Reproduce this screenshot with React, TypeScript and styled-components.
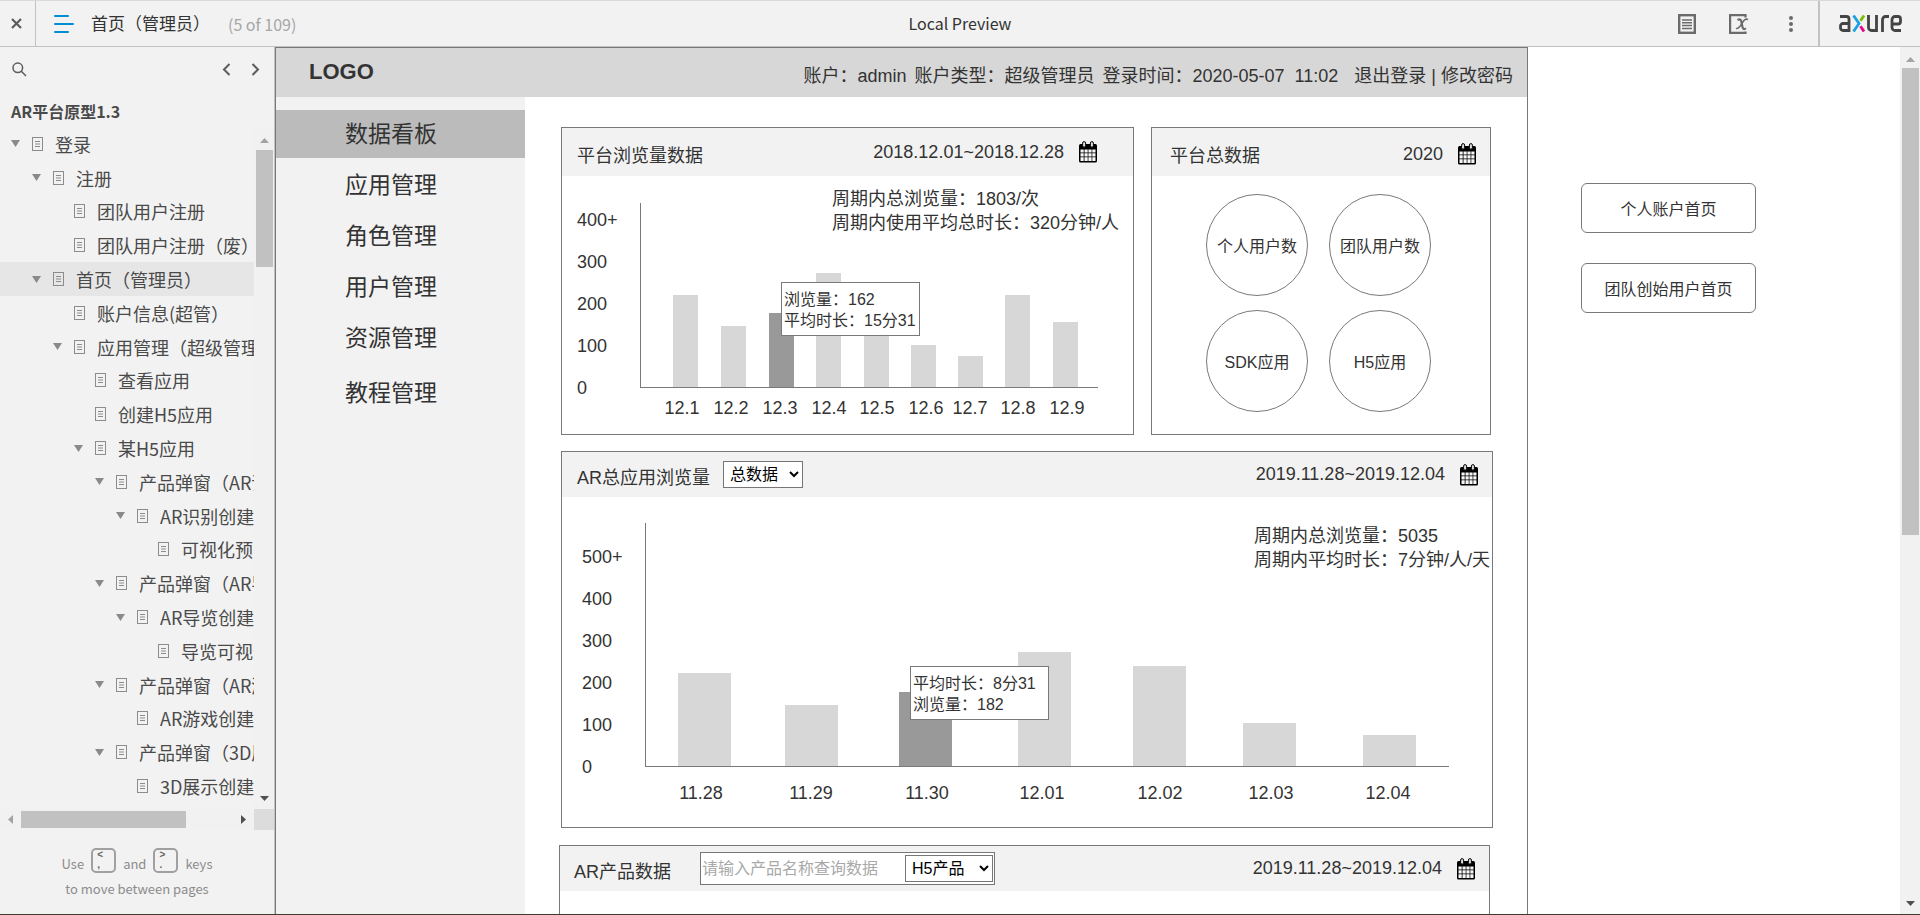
import React from "react";
import styled, { createGlobalStyle } from "styled-components";

const LINE = "#797979";
const UI_FONT = `"Noto Sans CJK SC", sans-serif`;
const PAGE_FONT = `"Liberation Sans", "Noto Sans CJK SC", sans-serif`;

const GlobalStyle = createGlobalStyle`
  * { box-sizing: border-box; }
  html, body, #root { height: 100%; }
  body { margin: 0; overflow: hidden; background: #fff; color: #333; font-family: ${PAGE_FONT}; }
  button, input, select { font-family: inherit; margin: 0; }
  button { background: none; border: 0; padding: 0; color: inherit; cursor: pointer; }
  a { color: inherit; text-decoration: none; }
  ul { list-style: none; margin: 0; padding: 0; }
  h1, h2, p { margin: 0; font-weight: 400; }
  svg { display: block; flex: none; }
`;

/* ---------- shell ---------- */

const Shell = styled.div`
  display: flex;
  flex-direction: column;
  height: 100vh;
  border-top: 1px solid #d9d9d9;
  border-bottom: 1px solid #3f3a2c;
`;

const TopBar = styled.header`
  display: grid;
  grid-template-columns: 1fr auto 1fr;
  flex: none;
  height: 46px;
  background: #f2f2f2;
  border-bottom: 1px solid #c2c2c2;
  font-family: ${UI_FONT};
  font-size: 16px;
`;

const TopLeft = styled.div`
  display: flex;
  align-items: center;
`;

const CloseButton = styled.button`
  display: flex;
  align-items: center;
  justify-content: center;
  width: 36px;
  height: 100%;
  padding-right: 2px;
  border-right: 1px solid #c2c2c2;
`;

const MenuButton = styled.button`
  margin: 0 17px 0 18px;
`;

const PageName = styled.h1`
  padding-bottom: 2px;
  font-size: 17px;
  line-height: 24px;
`;

const PageCount = styled.span`
  margin-left: 18px;
  color: #a6a6a6;
`;

const PreviewName = styled.div`
  align-self: center;
  padding-bottom: 2px;
  line-height: 24px;
`;

const TopRight = styled.div`
  display: flex;
  align-items: center;
  justify-content: flex-end;
`;

const ToolButton = styled.button`
  display: flex;
  justify-content: center;
  width: 52px;
`;

const Brand = styled.a`
  display: flex;
  align-items: center;
  width: 102px;
  height: 100%;
  margin-left: 1px;
  padding-left: 19px;
  border-left: 2px solid #c2c2c2;
`;

const Body = styled.div`
  display: flex;
  flex: 1;
  min-height: 0;
`;

/* ---------- page list ---------- */

const Sidebar = styled.aside`
  display: flex;
  flex-direction: column;
  flex: none;
  width: 275px;
  background: #f2f2f2;
  border-right: 1px solid #c2c2c2;
  color: #4a4a4a;
  font-family: ${UI_FONT};
`;

const SideTools = styled.div`
  display: flex;
  align-items: center;
  height: 45px;
  padding: 0 14px 0 12px;
  gap: 20px;
`;

const SearchButton = styled.button`
  margin-right: auto;
`;

const ProjectName = styled.h2`
  padding-left: 11px;
  height: 35px;
  font-size: 16px;
  font-weight: 700;
  line-height: 38px;
`;

const TreeArea = styled.div`
  display: flex;
  flex: 1;
  min-height: 0;
`;

const Tree = styled.ul`
  display: flex;
  flex-direction: column;
  flex: 1;
  min-width: 0;
  overflow: hidden;
  padding-bottom: 6px;
`;

const TreeRow = styled.li<{ $level: number; $current?: boolean }>`
  display: flex;
  align-items: center;
  flex: 1;
  min-height: 0;
  padding-left: ${(p) => 11 + p.$level * 21}px;
  background: ${(p) => (p.$current ? "#e6e6e6" : "transparent")};
  white-space: nowrap;
`;

const Twisty = styled.span`
  flex: none;
  width: 21px;
`;

const TreeLink = styled.a`
  display: flex;
  align-items: center;
  gap: 12px;
  font-size: 18px;
  line-height: 24px;
`;

const ScrollTrack = styled.div<{ $row?: boolean }>`
  display: flex;
  flex-direction: ${(p) => (p.$row ? "row" : "column")};
  align-items: center;
  justify-content: space-between;
  flex: none;
  width: ${(p) => (p.$row ? "auto" : "20px")};
  height: ${(p) => (p.$row ? "21px" : "auto")};
  padding: ${(p) => (p.$row ? "0 8px" : "10px 0 8px")};
  background: #f1f1f1;
`;

const TreeScrollTrack = styled(ScrollTrack)`
  padding-top: 11px;
`;

const TreeThumb = styled.div`
  width: 17px;
  height: 117px;
  margin: 7px 0 auto;
  background: #c1c1c1;
`;

const TreeThumbRow = styled.div`
  width: 165px;
  height: 17px;
  margin: 0 auto 0 8px;
  background: #c1c1c1;
`;

const BottomScroll = styled.div`
  display: grid;
  grid-template-columns: 1fr 20px;
`;

const ScrollCorner = styled.div`
  background: #dcdcdc;
`;

const KeyHint = styled.footer`
  display: flex;
  flex-direction: column;
  align-items: center;
  height: 84px;
  padding-top: 16px;
  color: #8c8c8c;
  font-size: 13px;
  line-height: 27px;
`;

const KeyLine = styled.p`
  display: flex;
  align-items: center;
  height: 29px;
`;

const KeyWord = styled.span`
  padding-top: 6px;
`;

const KeyCap = styled.kbd`
  display: flex;
  flex-direction: column;
  width: 25px;
  height: 25px;
  margin: 0 7px;
  padding-left: 4px;
  border: 2px solid #a0a0a0;
  border-radius: 5px;
  color: #666;
  font-family: ${PAGE_FONT};
  font-size: 10px;
  font-weight: 700;
  line-height: 10px;
`;

/* ---------- prototype canvas ---------- */

const Canvas = styled.main`
  display: flex;
  flex: 1;
  min-width: 0;
  overflow: hidden;
`;

const Frame = styled.section`
  display: flex;
  flex-direction: column;
  flex: 1;
  min-width: 0;
  border: 1px solid ${LINE};
  border-bottom: 0;
`;

const FrameHeader = styled.header`
  display: flex;
  justify-content: space-between;
  flex: none;
  height: 49px;
  padding: 0 14px 0 33px;
  background: #d7d7d7;
`;

const Logo = styled.div`
  font-size: 22px;
  font-weight: 700;
  line-height: 48px;
`;

const Account = styled.div`
  display: flex;
  padding-top: 4px;
  font-size: 18px;
  line-height: 48px;
  white-space: nowrap;
`;

const AccountItem = styled.span`
  margin-right: 8px;
`;

const AccountLinks = styled.nav`
  display: flex;
  gap: 5px;
  margin-left: 8px;
`;

const FrameBody = styled.div`
  display: flex;
  flex: 1;
  min-height: 0;
`;

const Menu = styled.nav`
  flex: none;
  width: 249px;
  background: #f2f2f2;
`;

const MenuList = styled.ul`
  display: flex;
  flex-direction: column;
  gap: 3px;
  padding-top: 13px;
`;

const MenuItem = styled.li<{ $active?: boolean; $apart?: boolean }>`
  height: 48px;
  margin-top: ${(p) => (p.$apart ? 4 : 0)}px;
  padding-left: 69px;
  background: ${(p) => (p.$active ? "#bbbbbb" : "transparent")};
  font-size: 23px;
  line-height: 48px;
`;

const Content = styled.div`
  display: flex;
  flex-direction: column;
  flex: 1;
  min-width: 0;
  gap: 16px;
  padding: 30px 34px 0;
  overflow: hidden;
`;

const CardRow = styled.div`
  display: flex;
  gap: 17px;
  flex: none;
  padding: 0 2px;
`;

const Card = styled.article<{ $grow?: boolean; $width?: number; $margin?: string }>`
  position: relative;
  flex: ${(p) => (p.$grow ? "1" : "none")};
  width: ${(p) => (p.$width ? `${p.$width}px` : "auto")};
  margin: ${(p) => p.$margin ?? "0"};
  border: 1px solid ${LINE};
`;

const ProductCard = styled(Card)`
  min-height: 300px;
`;

const CardHeader = styled.div<{ $height: number; $right?: number; $left?: number }>`
  display: flex;
  align-items: center;
  height: ${(p) => p.$height}px;
  padding: 0 ${(p) => p.$right ?? 14}px 0 ${(p) => p.$left ?? 15}px;
  background: #f2f2f2;
  font-size: 18px;
  white-space: nowrap;
`;

const CardTitle = styled.h2`
  padding-top: 3px;
  font-size: 18px;
`;

const DateRange = styled.div<{ $low?: boolean }>`
  display: flex;
  align-items: center;
  gap: 15px;
  margin-left: auto;
  padding-top: ${(p) => (p.$low ? 4 : 0)}px;
`;

const Select = styled.select<{ $width: number }>`
  width: ${(p) => p.$width}px;
  height: 27px;
  padding: 0 2px;
  border: 1px solid #767676;
  border-radius: 0;
  background: #fff;
  color: #000;
  font-size: 16px;
`;

const TitleSelect = styled(Select)`
  margin-left: 13px;
`;

const SearchBox = styled.div`
  display: flex;
  align-items: center;
  width: 295px;
  height: 33px;
  margin-left: 29px;
  padding-right: 1px;
  border: 1px solid #767676;
  background: #fff;
`;

const SearchInput = styled.input`
  flex: 1;
  min-width: 0;
  padding: 0 1px;
  border: 0;
  outline: 0;
  background: transparent;
  font-size: 16px;
  &::placeholder { color: #a9a9a9; opacity: 1; }
`;

const Summary = styled.p<{ $top: number; $right: number }>`
  position: absolute;
  top: ${(p) => p.$top}px;
  right: ${(p) => p.$right}px;
  font-size: 18px;
  line-height: 24px;
  white-space: nowrap;
`;

const Chart = styled.div<{ $pad: string }>`
  display: flex;
  padding: ${(p) => p.$pad};
  font-size: 18px;
`;

const ScaleList = styled.ul<{ $width: number; $left: number; $top: number }>`
  flex: none;
  width: ${(p) => p.$width}px;
  padding-left: ${(p) => p.$left}px;
  margin-top: ${(p) => p.$top}px;
  line-height: 42px;
`;

const PlotColumn = styled.div<{ $top: number }>`
  flex: 1;
  min-width: 0;
  padding-top: ${(p) => p.$top}px;
`;

const Plot = styled.div<{ $height: number }>`
  position: relative;
  display: flex;
  align-items: flex-end;
  height: ${(p) => p.$height}px;
  border-left: 1px solid ${LINE};
  border-bottom: 1px solid ${LINE};
`;

const Bar = styled.div<{ $width: number; $height: number; $gap: number; $hot?: boolean }>`
  flex: none;
  width: ${(p) => p.$width}px;
  height: ${(p) => p.$height}px;
  margin-left: ${(p) => p.$gap}px;
  background: ${(p) => (p.$hot ? "#999999" : "#d7d7d7")};
`;

const MarkRow = styled.div<{ $height: number }>`
  display: flex;
  line-height: ${(p) => p.$height}px;
`;

const Mark = styled.span<{ $width: number; $gap: number }>`
  flex: none;
  width: ${(p) => p.$width}px;
  margin-left: ${(p) => p.$gap}px;
  text-align: center;
`;

const Tooltip = styled.div<{ $left: number; $top: number }>`
  position: absolute;
  left: ${(p) => p.$left}px;
  top: ${(p) => p.$top}px;
  width: 139px;
  height: 54px;
  padding: 6px 0 0 2px;
  border: 1px solid ${LINE};
  background: #fff;
  font-size: 16px;
  line-height: 21px;
  white-space: nowrap;
`;

const Circles = styled.div`
  display: grid;
  grid-template-columns: 102px 102px;
  gap: 14px 21px;
  padding: 18px 0 0 54px;
`;

const Circle = styled.div`
  display: flex;
  align-items: center;
  justify-content: center;
  height: 102px;
  border: 1px solid ${LINE};
  border-radius: 50%;
  font-size: 16px;
`;

const Shortcuts = styled.aside`
  display: flex;
  flex-direction: column;
  gap: 30px;
  flex: none;
  width: 372px;
  padding: 136px 0 0 53px;
`;

const Shortcut = styled.button`
  width: 175px;
  height: 50px;
  border: 1px solid ${LINE};
  border-radius: 6px;
  background: #fff;
  font-size: 16px;
`;

const PageThumb = styled.div`
  width: 17px;
  height: 467px;
  margin: 6px 0 auto;
  background: #c1c1c1;
`;

/* ---------- icons ---------- */

const Arrow = ({ dir, dim }: { dir: "up" | "down" | "left" | "right"; dim?: boolean }) => {
  const shapes = {
    up: { w: 9, h: 5, p: "0,5 9,5 4.5,0" },
    down: { w: 9, h: 5, p: "0,0 9,0 4.5,5" },
    left: { w: 5, h: 9, p: "5,0 5,9 0,4.5" },
    right: { w: 5, h: 9, p: "0,0 0,9 5,4.5" },
  };
  const s = shapes[dir];
  return (
    <svg width={s.w} height={s.h} viewBox={`0 0 ${s.w} ${s.h}`} aria-hidden>
      <polygon points={s.p} fill={dim ? "#a3a3a3" : "#505050"} />
    </svg>
  );
};

const TwistyIcon = () => (
  <svg width="9" height="7" viewBox="0 0 9 7" aria-hidden>
    <polygon points="0,0 9,0 4.5,7" fill="#8a8a8a" />
  </svg>
);

const SheetIcon = () => (
  <svg width="11" height="14" viewBox="0 0 11 14" fill="none" stroke="#8c8c8c" aria-hidden>
    <rect x="0.5" y="0.5" width="10" height="13" />
    <path d="M3 4.5h5M3 7h5M3 9.5h5" />
  </svg>
);

const CalendarIcon = () => (
  <svg width="18" height="22" viewBox="0 0 18 22" aria-hidden>
    <rect x="0" y="3" width="18" height="18.5" rx="1.5" fill="#000" />
    <path
      d="M1.500 8.500h3.200v3h-3.200zM5.500 8.500h3.200v3h-3.200zM9.400 8.500h3.200v3h-3.200zM13.300 8.500h3.200v3h-3.200zM1.500 12.300h3.200v3.200h-3.200zM5.500 12.300h3.200v3.200h-3.200zM9.400 12.300h3.200v3.200h-3.200zM13.300 12.300h3.200v3.200h-3.200zM1.500 16.300h3.200v3.700h-3.200zM5.500 16.300h3.200v3.700h-3.200zM9.400 16.300h3.200v3.700h-3.200zM13.300 16.300h3.200v3.700h-3.200z"
      fill="#f6f6f6"
    />
    <rect x="3.6" y="0.6" width="3" height="5.6" rx="1.5" fill="#ddd" stroke="#000" />
    <rect x="11.4" y="0.6" width="3" height="5.6" rx="1.5" fill="#ddd" stroke="#000" />
  </svg>
);

const NotesIcon = () => (
  <svg width="18" height="20" viewBox="0 0 18 20" fill="none" stroke="#6b6b6b" strokeWidth="2.4" aria-hidden>
    <rect x="1.200" y="1.200" width="15.600" height="17.600" />
    <path d="M4 6h10M4 8.800h10M4 11.600h10M4 14.400h10" strokeWidth="1.500" />
  </svg>
);

const ConsoleIcon = () => (
  <svg width="20" height="20" viewBox="0 0 20 20" fill="none" stroke="#6b6b6b" strokeWidth="2.2" aria-hidden>
    <path d="M16.500 3.500V1.100H1.100v17.800h15.400v-1.500" />
    <path d="M8.500 6c2.500-1.400 3.500-.3 3.900 1.800l1 5c.4 2.200 1.700 3 3.500 1.400" />
    <path d="M19 5.600c-2.200-1.400-4 .4-5.800 3.400s-3.600 6.200-6.200 5.400" strokeWidth="1.500" />
  </svg>
);

const DotsIcon = () => (
  <svg width="4" height="16" viewBox="0 0 4 16" fill="#6b6b6b" aria-hidden>
    <circle cx="2" cy="2" r="2" />
    <circle cx="2" cy="8" r="2" />
    <circle cx="2" cy="14" r="2" />
  </svg>
);

const BrandMark = () => (
  <svg width="64" height="17" viewBox="0 0 64 17" role="img" aria-label="axure">
    <g fill="none" strokeWidth="2.800">
      <g stroke="#444">
        <path d="M1 1.500h6.500a2.500 2.500 0 0 1 2.500 2.500v11.500H4a2.500 2.500 0 0 1-2.500-2.500v-2A2.500 2.500 0 0 1 4 8.500h6" />
        <path d="M29.500 0v12.500a3 3 0 0 0 3 3h5V0" />
        <path d="M43.500 17V4.500a3 3 0 0 1 3-3H50" />
        <path d="M62 15.500h-6a3 3 0 0 1-3-3V4.500a3 3 0 0 1 3-3h3a2.500 2.500 0 0 1 2.500 2.500v2.500a2.500 2.500 0 0 1-2.500 2.500H54" />
      </g>
      <path d="M14.500.500L20 8.500 14.500 16.500" stroke="#1ba1e2" />
      <path d="M25 .500L21.500 5.800" stroke="#7fba00" />
      <path d="M25 16.500L21.500 11.200" stroke="#ec008c" />
    </g>
  </svg>
);

/* ---------- data ---------- */

type Page = { name: string; level: number; parent?: boolean; current?: boolean };

const pages: Page[] = [
  { name: "登录", level: 0, parent: true },
  { name: "注册", level: 1, parent: true },
  { name: "团队用户注册", level: 2 },
  { name: "团队用户注册（废）", level: 2 },
  { name: "首页（管理员）", level: 1, parent: true, current: true },
  { name: "账户信息(超管）", level: 2 },
  { name: "应用管理（超级管理员）", level: 2, parent: true },
  { name: "查看应用", level: 3 },
  { name: "创建H5应用", level: 3 },
  { name: "某H5应用", level: 3, parent: true },
  { name: "产品弹窗（AR识别）", level: 4, parent: true },
  { name: "AR识别创建", level: 5, parent: true },
  { name: "可视化预览", level: 6 },
  { name: "产品弹窗（AR导览）", level: 4, parent: true },
  { name: "AR导览创建", level: 5, parent: true },
  { name: "导览可视化", level: 6 },
  { name: "产品弹窗（AR游戏）", level: 4, parent: true },
  { name: "AR游戏创建", level: 5 },
  { name: "产品弹窗（3D展示）", level: 4, parent: true },
  { name: "3D展示创建", level: 5 },
];

const menu = ["数据看板", "应用管理", "角色管理", "用户管理", "资源管理", "教程管理"];

type ChartColumn = { label: string; height: number; gap: number; markGap: number; hot?: boolean };

const platformDays: ChartColumn[] = [
  { label: "12.1", height: 92, gap: 32, markGap: 24 },
  { label: "12.2", height: 61, gap: 23, markGap: 13 },
  { label: "12.3", height: 74, gap: 23, markGap: 13, hot: true },
  { label: "12.4", height: 114, gap: 22, markGap: 13 },
  { label: "12.5", height: 74, gap: 23, markGap: 12 },
  { label: "12.6", height: 42, gap: 22, markGap: 13 },
  { label: "12.7", height: 31, gap: 22, markGap: 8 },
  { label: "12.8", height: 92, gap: 22, markGap: 12 },
  { label: "12.9", height: 65, gap: 23, markGap: 13 },
];

const appDays: ChartColumn[] = [
  { label: "11.28", height: 93, gap: 32, markGap: 33 },
  { label: "11.29", height: 61, gap: 54, markGap: 64 },
  { label: "11.30", height: 74, gap: 61, markGap: 70, hot: true },
  { label: "12.01", height: 114, gap: 66, markGap: 69 },
  { label: "12.02", height: 100, gap: 62, markGap: 72 },
  { label: "12.03", height: 43, gap: 57, markGap: 65 },
  { label: "12.04", height: 31, gap: 67, markGap: 71 },
];

const totals = ["个人用户数", "团队用户数", "SDK应用", "H5应用"];

/* ---------- app ---------- */

export default function App() {
  return (
    <Shell>
      <GlobalStyle />
      <TopBar>
        <TopLeft>
          <CloseButton aria-label="Close">
            <svg width="11" height="11" viewBox="0 0 11 11" stroke="#5c5c5c" strokeWidth="2.200">
              <path d="M1 1l9 9M10 1l-9 9" />
            </svg>
          </CloseButton>
          <MenuButton aria-label="Pages">
            <svg width="20" height="18" viewBox="0 0 20 18" stroke="#008fd4" strokeWidth="2" strokeLinecap="round">
              <path d="M1 1h13M1 9h18M1 17h13" />
            </svg>
          </MenuButton>
          <PageName>首页（管理员）</PageName>
          <PageCount>(5 of 109)</PageCount>
        </TopLeft>
        <PreviewName>Local Preview</PreviewName>
        <TopRight>
          <ToolButton aria-label="Notes"><NotesIcon /></ToolButton>
          <ToolButton aria-label="Console"><ConsoleIcon /></ToolButton>
          <ToolButton aria-label="More"><DotsIcon /></ToolButton>
          <Brand href="#"><BrandMark /></Brand>
        </TopRight>
      </TopBar>

      <Body>
        <Sidebar>
          <SideTools>
            <SearchButton aria-label="Search">
              <svg width="15" height="15" viewBox="0 0 15 15" fill="none" stroke="#5c5c5c" strokeWidth="1.500">
                <circle cx="5.800" cy="5.800" r="4.800" />
                <path d="M9.300 9.300l4.700 4.700" />
              </svg>
            </SearchButton>
            <button aria-label="Previous page">
              <svg width="9" height="13" viewBox="0 0 9 13" fill="none" stroke="#5c5c5c" strokeWidth="2">
                <path d="M7.500 1L2 6.500 7.500 12" />
              </svg>
            </button>
            <button aria-label="Next page">
              <svg width="9" height="13" viewBox="0 0 9 13" fill="none" stroke="#5c5c5c" strokeWidth="2">
                <path d="M1.500 1L7 6.500 1.500 12" />
              </svg>
            </button>
          </SideTools>
          <ProjectName>AR平台原型1.3</ProjectName>
          <TreeArea>
            <Tree>
              {pages.map((p, i) => (
                <TreeRow key={i} $level={p.level} $current={p.current}>
                  <Twisty>{p.parent && <TwistyIcon />}</Twisty>
                  <TreeLink href="#"><SheetIcon />{p.name}</TreeLink>
                </TreeRow>
              ))}
            </Tree>
            <TreeScrollTrack>
              <Arrow dir="up" dim />
              <TreeThumb />
              <Arrow dir="down" />
            </TreeScrollTrack>
          </TreeArea>
          <BottomScroll>
            <ScrollTrack $row>
              <Arrow dir="left" dim />
              <TreeThumbRow />
              <Arrow dir="right" />
            </ScrollTrack>
            <ScrollCorner />
          </BottomScroll>
          <KeyHint>
            <KeyLine>
              <KeyWord>Use</KeyWord>
              <KeyCap><span>&lt;</span><span>,</span></KeyCap>
              <KeyWord>and</KeyWord>
              <KeyCap><span>&gt;</span><span>.</span></KeyCap>
              <KeyWord>keys</KeyWord>
            </KeyLine>
            <p>to move between pages</p>
          </KeyHint>
        </Sidebar>

        <Canvas>
          <Frame>
            <FrameHeader>
              <Logo>LOGO</Logo>
              <Account>
                <AccountItem>账户：admin</AccountItem>
                <AccountItem>账户类型：超级管理员</AccountItem>
                <AccountItem>登录时间：2020-05-07&nbsp; 11:02</AccountItem>
                <AccountLinks>
                  <a href="#">退出登录</a>
                  <span>|</span>
                  <a href="#">修改密码</a>
                </AccountLinks>
              </Account>
            </FrameHeader>
            <FrameBody>
              <Menu>
                <MenuList>
                  {menu.map((m, i) => (
                    <MenuItem key={m} $active={i === 0} $apart={i === menu.length - 1}>
                      <a href="#">{m}</a>
                    </MenuItem>
                  ))}
                </MenuList>
              </Menu>
              <Content>
                <CardRow>
                  <Card $grow>
                    <CardHeader $height={48} $right={36}>
                      <CardTitle>平台浏览量数据</CardTitle>
                      <DateRange>2018.12.01~2018.12.28<CalendarIcon /></DateRange>
                    </CardHeader>
                    <Summary $top={59} $right={14}>
                      周期内总浏览量：1803/次<br />周期内使用平均总时长：320分钟/人
                    </Summary>
                    <Chart $pad="22px 35px 6px 0">
                      <ScaleList $width={78} $left={15} $top={1}>
                        {["400+", "300", "200", "100", "0"].map((v) => <li key={v}>{v}</li>)}
                      </ScaleList>
                      <PlotColumn $top={5}>
                        <Plot $height={185}>
                          {platformDays.map((d) => (
                            <Bar key={d.label} $width={25} $height={d.height} $gap={d.gap} $hot={d.hot} />
                          ))}
                          <Tooltip $left={140} $top={79}>浏览量：162<br />平均时长：15分31</Tooltip>
                        </Plot>
                        <MarkRow $height={40}>
                          {platformDays.map((d) => (
                            <Mark key={d.label} $width={36} $gap={d.markGap}>{d.label}</Mark>
                          ))}
                        </MarkRow>
                      </PlotColumn>
                    </Chart>
                  </Card>
                  <Card $width={340}>
                    <CardHeader $height={48} $left={18}>
                      <CardTitle>平台总数据</CardTitle>
                      <DateRange $low>2020<CalendarIcon /></DateRange>
                    </CardHeader>
                    <Circles>
                      {totals.map((t) => <Circle key={t}>{t}</Circle>)}
                    </Circles>
                  </Card>
                </CardRow>

                <Card $margin="0 0 1px 2px">
                  <CardHeader $height={45}>
                    <CardTitle>AR总应用浏览量</CardTitle>
                    <TitleSelect $width={80} aria-label="数据范围"><option>总数据</option></TitleSelect>
                    <DateRange>2019.11.28~2019.12.04<CalendarIcon /></DateRange>
                  </CardHeader>
                  <Summary $top={72} $right={2}>
                    周期内总浏览量：5035<br />周期内平均时长：7分钟/人/天
                  </Summary>
                  <Chart $pad="26px 43px 8px 0">
                    <ScaleList $width={83} $left={20} $top={13}>
                      {["500+", "400", "300", "200", "100", "0"].map((v) => <li key={v}>{v}</li>)}
                    </ScaleList>
                    <PlotColumn $top={0}>
                      <Plot $height={244}>
                        {appDays.map((d) => (
                          <Bar key={d.label} $width={53} $height={d.height} $gap={d.gap} $hot={d.hot} />
                        ))}
                        <Tooltip $left={264} $top={143}>平均时长：8分31<br />浏览量：182</Tooltip>
                      </Plot>
                      <MarkRow $height={52}>
                        {appDays.map((d) => (
                          <Mark key={d.label} $width={46} $gap={d.markGap}>{d.label}</Mark>
                        ))}
                      </MarkRow>
                    </PlotColumn>
                  </Chart>
                </Card>

                <ProductCard $grow $margin="0 3px 0 0">
                  <CardHeader $height={45} $left={14}>
                    <CardTitle>AR产品数据</CardTitle>
                    <SearchBox>
                      <SearchInput aria-label="产品名称" placeholder="请输入产品名称查询数据" />
                      <Select $width={88} aria-label="产品类型"><option>H5产品</option></Select>
                    </SearchBox>
                    <DateRange>2019.11.28~2019.12.04<CalendarIcon /></DateRange>
                  </CardHeader>
                </ProductCard>
              </Content>
            </FrameBody>
          </Frame>
          <Shortcuts>
            <Shortcut>个人账户首页</Shortcut>
            <Shortcut>团队创始用户首页</Shortcut>
          </Shortcuts>
          <ScrollTrack>
            <Arrow dir="up" dim />
            <PageThumb />
            <Arrow dir="down" />
          </ScrollTrack>
        </Canvas>
      </Body>
    </Shell>
  );
}
